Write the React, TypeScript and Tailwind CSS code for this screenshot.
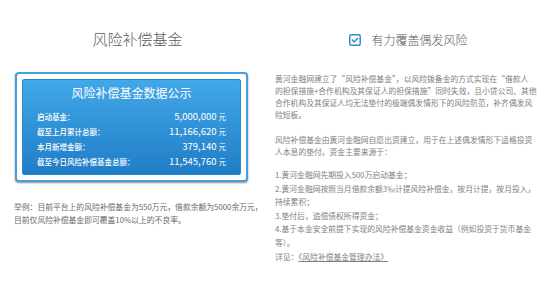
const rows = [
  { label: "启动基金：", value: "5,000,000" },
  { label: "截至上月累计总额：", value: "11,166,620" },
  { label: "本月新增金额：", value: "379,140" },
  { label: "截至今日风险补偿基金总额：", value: "11,545,760" },
];

const para1 = [
  "黄河金融网建立了“风险补偿基金”，以风险拨备金的方式实现在“借款人",
  "的担保措施+合作机构及其保证人的担保措施”同时失效，且小贷公司、其他",
  "合作机构及其保证人均无法垫付的极端偶发情形下的风险防范，补齐偶发风",
  "险短板。",
];

const para2 = [
  "风险补偿基金由黄河金融网自愿出资建立，用于在上述偶发情形下适格投资",
  "人本息的垫付。资金主要来源于：",
];

const list = [
  "1.黄河金融网先期投入500万启动基金；",
  "2.黄河金融网按照当月借款余额3‰计提风险补偿金，按月计提，按月投入，",
  "持续累积；",
  "3.垫付后，追偿债权所得资金；",
  "4.基于本金安全前提下实现的风险补偿基金资金收益（例如投资于货币基金",
  "等）。",
];

function CheckIcon() {
  return (
    <svg width="12" height="12" viewBox="0 0 12 12" className="mr-[10px]">
      <rect x="0.8" y="0.8" width="10.4" height="10.4" rx="1.5" fill="none" stroke="#2b8dc6" strokeWidth="1.5" />
      <path d="M3.4 6.1 L5.2 7.9 L8.6 4.3" fill="none" stroke="#2b8dc6" strokeWidth="1.4" strokeLinecap="round" strokeLinejoin="round" />
    </svg>
  );
}

export default function App() {
  return (
    <div className="w-[550px] h-[304px] bg-white flex font-['Noto_Sans_CJK_SC',sans-serif] overflow-hidden">
      {/* left column */}
      <div className="w-[275px] px-[14px] flex flex-col">
        <h2 className="mt-[29px] text-center text-[15px] leading-[20px] text-[#5a5a5a] font-light">
          风险补偿基金
        </h2>
        <div className="mt-[23px] ml-px w-[233px] rounded-[4px] border-2 border-[#45a0dc] bg-white p-[5px] shadow-[0_1px_2px_rgba(0,0,0,0.45)]">
          <div className="rounded-[2px] border border-[#2a88cc] bg-gradient-to-b from-[#42a8e8] to-[#1f7dc5] px-[14px] pt-[5px] pb-[5px] text-white">
            <div className="text-center text-[12px] leading-[16px]">风险补偿基金数据公示</div>
            <div className="mt-[8px]">
              {rows.map((r) => (
                <div key={r.label} className="flex items-center justify-between h-[15px]">
                  <span className="text-[7.5px] font-medium">{r.label}</span>
                  <span className="text-[9.5px]">
                    {r.value}
                    <span className="ml-[2px] text-[7.5px]">元</span>
                  </span>
                </div>
              ))}
            </div>
          </div>
        </div>
        <div className="mt-[18px] text-[7.8px] leading-[13px] text-[#6a6a6a] whitespace-nowrap">
          <p>举例：目前平台上的风险补偿基金为550万元，借款余额为5000余万元，</p>
          <p>目前仅风险补偿基金即可覆盖10%以上的不良率。</p>
        </div>
      </div>

      {/* right column */}
      <div className="flex-1 pr-[8px] flex flex-col">
        <div className="mt-[32px] flex items-center justify-center">
          <CheckIcon />
          <span className="text-[12px] leading-[16px] text-[#5a5a5a] font-light">有力覆盖偶发风险</span>
        </div>
        <div className="mt-[25px] text-[7.8px] text-[#808080] whitespace-nowrap">
          <div className="leading-[12px]">
            {para1.map((l) => (
              <p key={l}>{l}</p>
            ))}
          </div>
          <div className="mt-[13px] leading-[12px]">
            {para2.map((l) => (
              <p key={l}>{l}</p>
            ))}
          </div>
          <div className="mt-[10px] leading-[13.6px]">
            {list.map((l) => (
              <p key={l}>{l}</p>
            ))}
            <p>
              详见：<span className="underline">《风险补偿基金管理办法》</span>
            </p>
          </div>
        </div>
      </div>
    </div>
  );
}
